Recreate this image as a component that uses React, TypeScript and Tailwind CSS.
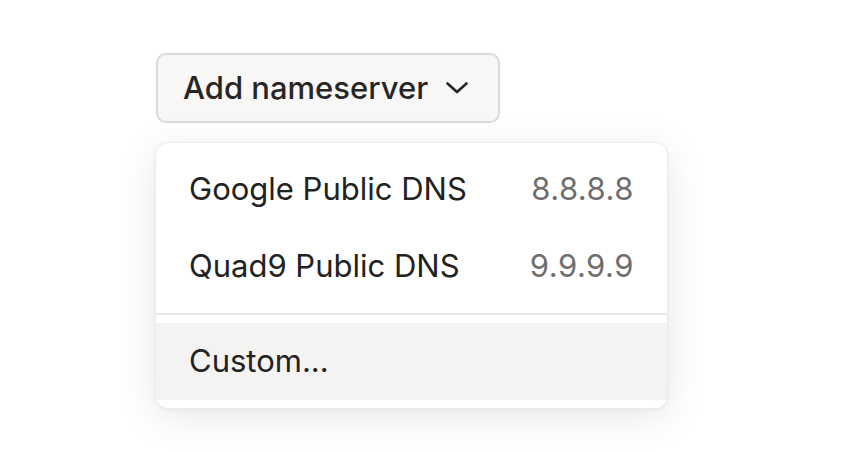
import React from "react";

export default function App() {
  return (
    <div
      className="w-[854px] h-[452px] bg-white overflow-hidden"
      style={{ fontFamily: "Inter, 'Noto Sans', sans-serif" }}
    >
      <div className="flex flex-col items-start pl-[156px] pt-[53px] gap-[20px]">
        <button className="flex items-center h-[70px] w-[344px] pl-[25px] pr-[30px] rounded-[10px] border-2 border-[#dcdad7] bg-[#f8f7f5] text-[#262626] text-[31px] font-medium">
          <span>Add nameserver</span>
          <svg
            className="ml-auto"
            width="22"
            height="14"
            viewBox="0 0 22 14"
            fill="none"
            stroke="#262626"
            strokeWidth="2.6"
            strokeLinecap="round"
            strokeLinejoin="round"
          >
            <path d="M1.5 2.5 L11 11 L20.5 2.5" />
          </svg>
        </button>
        <div className="w-[511px] rounded-[12px] bg-white py-[8px] shadow-[0_8px_40px_rgba(0,0,0,0.10),0_1px_4px_rgba(0,0,0,0.08)] ring-1 ring-[#ececec]">
          <div className="flex items-center justify-between h-[77px] px-[33px] text-[31px]">
            <span className="text-[#222222]">Google Public DNS</span>
            <span className="text-[#6e6e6e] tracking-[0.5px]">8.8.8.8</span>
          </div>
          <div className="flex items-center justify-between h-[77px] px-[33px] text-[31px]">
            <span className="text-[#222222]">Quad9 Public DNS</span>
            <span className="text-[#6e6e6e] tracking-[0.5px]">9.9.9.9</span>
          </div>
          <div className="h-[2px] my-[8px] bg-[#e9e7e7]" />
          <div className="flex items-center h-[77px] px-[33px] text-[31px] bg-[#f4f3f2]">
            <span className="text-[#222222]">Custom...</span>
          </div>
        </div>
      </div>
    </div>
  );
}
